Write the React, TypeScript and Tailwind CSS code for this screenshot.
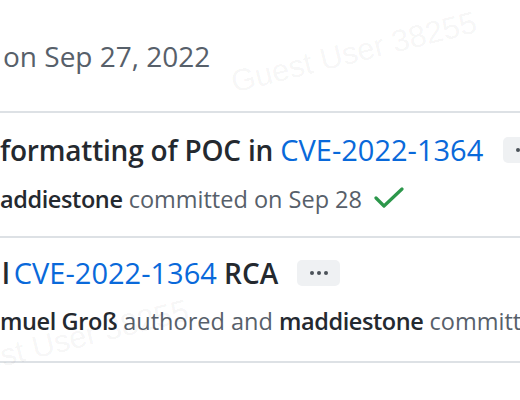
import React from "react";

const CheckIcon: React.FC = () => (
  <svg width="32" height="24" viewBox="0 0 32 24" className="shrink-0" aria-hidden="true">
    <polyline
      points="3,11 11,19 29,2"
      fill="none"
      stroke="#2c974b"
      strokeWidth="3.2"
      strokeLinecap="round"
      strokeLinejoin="round"
    />
  </svg>
);

const MoreButton: React.FC = () => (
  <button
    type="button"
    className="shrink-0 w-[43px] h-[26px] rounded-[5px] bg-[#eff1f3] flex items-center justify-center gap-[3px]"
    aria-label="Show description"
  >
    <span className="w-[4px] h-[4px] rounded-full bg-[#4b5259]" />
    <span className="w-[4px] h-[4px] rounded-full bg-[#4b5259]" />
    <span className="w-[4px] h-[4px] rounded-full bg-[#4b5259]" />
  </button>
);

const Watermark: React.FC<{ className: string }> = ({ className }) => (
  <span
    className={`absolute whitespace-nowrap text-[31px] text-[#000000]/[0.05] font-['Liberation_Sans',Arial,sans-serif] origin-left -rotate-[14deg] pointer-events-none select-none ${className}`}
  >
    Guest User 38255
  </span>
);

export default function App() {
  return (
    <div className="relative w-[520px] h-[400px] overflow-hidden bg-white font-['Open_Sans','Noto_Sans',sans-serif]">
      {/* date header */}
      <div className="h-[111px] flex items-center pl-[3px]">
        <h2 className="text-[28px] text-[#57606a] whitespace-nowrap leading-none">on Sep 27, 2022</h2>
      </div>

      {/* commit list */}
      <div className="border-y-2 border-[#dde1e5]">
        <div className="h-[125px] pt-[20px] border-b-2 border-[#dde1e5]">
          <div className="flex items-center gap-[20px] whitespace-nowrap">
            <p className="text-[28px] font-semibold text-[#24292f] leading-[34px] tracking-[-0.2px]">
              formatting of POC in{" "}
              <a className="text-[29px] font-normal text-[#0969da] tracking-normal">CVE-2022-1364</a>
            </p>
            <MoreButton />
          </div>
          <div className="mt-[17px] flex items-center gap-[11px] whitespace-nowrap">
            <p className="text-[23.5px] text-[#57606a] leading-[30px]">
              <span className="font-semibold text-[#24292f] tracking-[-0.4px]">addiestone</span> committed on Sep 28
            </p>
            <CheckIcon />
          </div>
        </div>

        <div className="h-[123px] pt-[18px] pl-[2px]">
          <div className="flex items-center gap-[19px] whitespace-nowrap">
            <p className="text-[28px] font-semibold text-[#24292f] leading-[34px]">
              l<a className="ml-[4px] text-[29px] font-normal text-[#0969da]">CVE-2022-1364</a> RCA
            </p>
            <MoreButton />
          </div>
          <div className="mt-[16px] -ml-[2px] whitespace-nowrap">
            <p className="text-[23.5px] text-[#57606a] leading-[30px]">
              <span className="font-semibold text-[#24292f] tracking-[-0.4px]">muel Groß</span> authored and{" "}
              <span className="font-semibold text-[#24292f] tracking-[-0.4px]">maddiestone</span> committed
            </p>
          </div>
        </div>
      </div>

      <Watermark className="left-[232px] top-[60px]" />
      <Watermark className="-left-[56px] top-[348px]" />
    </div>
  );
}
